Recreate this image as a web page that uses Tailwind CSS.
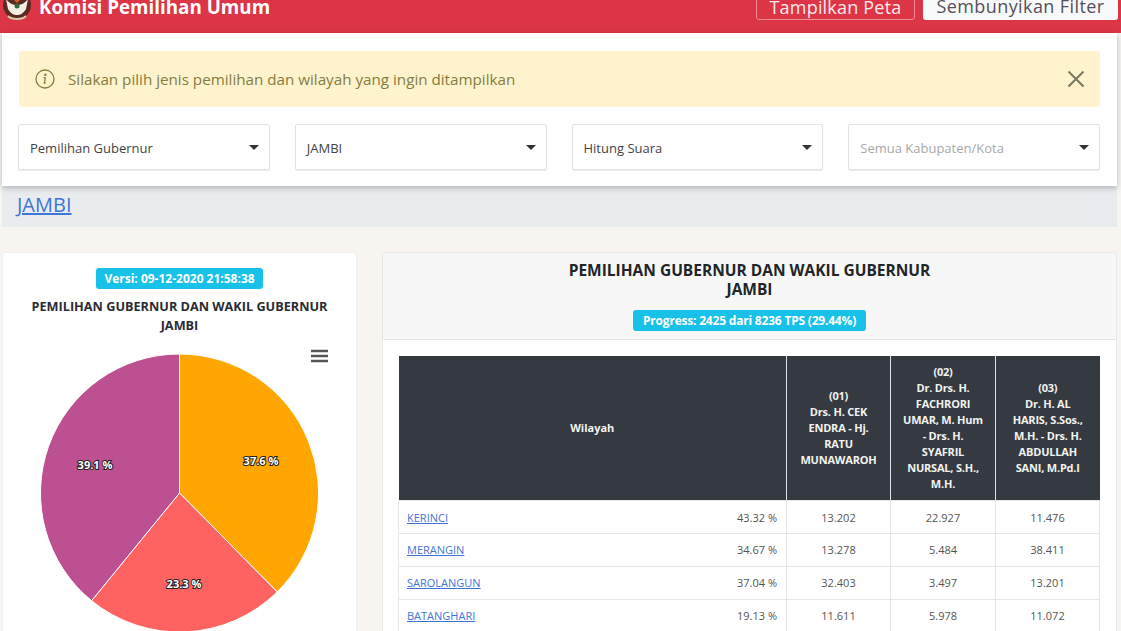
<!DOCTYPE html>
<html lang="en">
  <head>
    <meta charset="UTF-8" />
    <meta name="viewport" content="width=device-width, initial-scale=1.0" />
    <title>Komisi Pemilihan Umum</title>
    <script src="https://cdn.jsdelivr.net/npm/@tailwindcss/browser@4"></script>
  </head>
  <body class="bg-[#f8f5f1] h-[631px] overflow-hidden font-['Open_Sans',sans-serif] text-[#212529]">
    <header class="bg-[#dc3545] h-[33px] flex items-end justify-between pr-[3px] pb-[13px] overflow-hidden">
      <div class="flex items-center pl-[2px] h-[30px] mb-[-6px] relative top-[-4px]">
        <svg class="w-[30px] h-[30px]" viewBox="0 0 30 30">
          <circle cx="15" cy="13" r="14" fill="#5a2a22" />
          <path d="M4 7 C8 12 11 13 15 13 C19 13 22 12 26 7 L24 17 C21 22 18 23 15 23 C12 23 9 22 6 17 Z" fill="#f4efe6" />
          <path d="M9 5 L15 11 L21 5 L19 2 L11 2 Z" fill="#c9602f" />
          <circle cx="15" cy="14" r="2.5" fill="#2f6b3a" />
          <path d="M6 24 C10 28 20 28 24 24" stroke="#d8c9a8" stroke-width="2" fill="none" />
        </svg>
        <span class="ml-[7px] text-white font-bold text-[18.8px] leading-none">Komisi Pemilihan Umum</span>
      </div>
      <div class="flex gap-[8px]">
        <button class="h-[30px] w-[159px] border border-[#f08a94] rounded-[3px] text-white/90 text-[18px] leading-[30px] tracking-[0.2px] pt-[1px]">Tampilkan Peta</button>
        <button class="h-[30px] w-[195px] bg-[#f8f9fa] rounded-[3px] text-[#55505a] text-[18px] leading-[30px] tracking-[0.4px] pt-[1px]">Sembunyikan Filter</button>
      </div>
    </header>

    <div class="ml-[2px] mr-[4px]">
      <section class="relative bg-white h-[153px] px-[16px] pt-[18px] shadow-[0_2px_6px_rgba(0,0,0,0.25)]">
        <div class="bg-[#fff3cd] h-[56px] ml-[1px] w-[1081px] rounded-[3px] flex items-center pl-[16px] pr-[15px] text-[#857d3f]">
          <svg class="w-[20px] h-[20px] shrink-0" viewBox="0 0 20 20" fill="none" stroke="#857d3f" stroke-width="1.3">
            <circle cx="10" cy="10" r="9" />
            <path d="M10.4 8.5 L9.5 14 M8.6 8.6 H10.4 M8.6 14 H10.6" />
            <circle cx="10.4" cy="5.8" r="0.6" fill="#857d3f" />
          </svg>
          <span class="ml-[13px] text-[15.2px] flex-1">Silakan pilih jenis pemilihan dan wilayah yang ingin ditampilkan</span>
          <svg class="w-[18px] h-[18px]" viewBox="0 0 18 18" stroke="#78775f" stroke-width="2" fill="none">
            <path d="M1.5 1.5 L16.5 16.5 M16.5 1.5 L1.5 16.5" />
          </svg>
        </div>
        <div class="flex gap-[25px] mt-[17px] w-[1082px] text-[13px] text-[#444]">
          <div class="flex-1 h-[46px] bg-white border border-[#e3e3e3] rounded-[2px] shadow-[0_1px_1px_rgba(0,0,0,0.08)] flex items-center justify-between pl-[11px] pr-[10px]">
            <span class="pt-[3px]">Pemilihan Gubernur</span>
            <span class="w-0 h-0 border-x-[5px] border-x-transparent border-t-[5px] border-t-[#333]"></span>
          </div>
          <div class="flex-1 h-[46px] bg-white border border-[#e3e3e3] rounded-[2px] shadow-[0_1px_1px_rgba(0,0,0,0.08)] flex items-center justify-between pl-[11px] pr-[10px]">
            <span class="pt-[3px]">JAMBI</span>
            <span class="w-0 h-0 border-x-[5px] border-x-transparent border-t-[5px] border-t-[#333]"></span>
          </div>
          <div class="flex-1 h-[46px] bg-white border border-[#e3e3e3] rounded-[2px] shadow-[0_1px_1px_rgba(0,0,0,0.08)] flex items-center justify-between pl-[11px] pr-[10px]">
            <span class="pt-[3px]">Hitung Suara</span>
            <span class="w-0 h-0 border-x-[5px] border-x-transparent border-t-[5px] border-t-[#333]"></span>
          </div>
          <div class="flex-1 h-[46px] bg-white border border-[#e3e3e3] rounded-[2px] shadow-[0_1px_1px_rgba(0,0,0,0.08)] flex items-center justify-between pl-[11px] pr-[10px]">
            <span class="pt-[3px] text-[#a8a8a8]">Semua Kabupaten/Kota</span>
            <span class="w-0 h-0 border-x-[5px] border-x-transparent border-t-[5px] border-t-[#333]"></span>
          </div>
        </div>
      </section>

      <nav class="bg-[#e9ecef] h-[41px] pl-[15px] text-[20px] leading-[38px]">
        <a href="#" class="text-[#3f75d6] underline">JAMBI</a>
      </nav>
    </div>

    <main class="flex mt-[25px] ml-[2px] mr-[4px] gap-[25px] items-start">
      <section class="w-[355px] shrink-0 bg-white border border-[#eeeeee] rounded-[3px] pt-[12px] text-center">
        <span class="inline-block bg-[#17c1e8] text-white font-bold text-[12px] leading-[21px] h-[21px] px-[8px] rounded-[3px]">Versi: 09-12-2020 21:58:38</span>
        <h2 class="mt-[8px] font-bold text-[12.7px] leading-[19px] text-[#2b2b33]">PEMILIHAN GUBERNUR DAN WAKIL GUBERNUR<br />JAMBI</h2>
        <svg class="block mt-[11px]" width="353" height="300" viewBox="-1 -8 353 300">
          <g stroke="#fff" stroke-width="1">
            <path d="M175.5 139 L175.5 0 A139 139 0 0 1 273.2 237.9 Z" fill="#ffa600" />
            <path d="M175.5 139 L273.2 237.9 A139 139 0 0 1 87.6 246.7 Z" fill="#ff6361" />
            <path d="M175.5 139 L87.6 246.7 A139 139 0 0 1 175.5 0 Z" fill="#bc5090" />
          </g>
          <g fill="#fff" stroke="#222" stroke-width="2" paint-order="stroke" font-size="11" font-weight="700" text-anchor="middle" font-family="'Open Sans', sans-serif">
            <text x="257" y="111">37.6 %</text>
            <text x="180" y="234">23.3 %</text>
            <text x="91" y="115">39.1 %</text>
          </g>
          <path d="M307 -3 H324 M307 2 H324 M307 7 H324" stroke="#555" stroke-width="2.6" />
        </svg>
      </section>

      <section class="w-[735px] shrink-0 bg-white border border-[#e8e8e8] rounded-[3px]">
        <div class="bg-[#f7f7f7] h-[87px] border-b border-[#e5e5e5] pt-[8px] text-center">
          <h2 class="font-bold text-[15.5px] leading-[19px] text-[#212529]">PEMILIHAN GUBERNUR DAN WAKIL GUBERNUR<br />JAMBI</h2>
          <span class="inline-block mt-[11px] bg-[#17c1e8] text-white font-bold text-[12px] leading-[21px] h-[21px] px-[10px] rounded-[3px] tracking-[-0.2px]">Progress: 2425 dari 8236 TPS (29.44%)</span>
        </div>
        <div class="pl-[15px] pt-[16px]">
          <table class="table-fixed border-collapse w-[701px] text-[11px]">
            <colgroup>
              <col class="w-[388px]" />
              <col class="w-[104px]" />
              <col class="w-[105px]" />
              <col class="w-[104px]" />
            </colgroup>
            <thead class="bg-[#343a40] text-[#f2f2f2] font-bold leading-[16px] text-center">
              <tr class="h-[144px]">
                <th class="px-[8px]">Wilayah</th>
                <th class="px-[8px] border-l border-[#dee2e6] tracking-[-0.2px]">(01)<br />Drs. H. CEK<br />ENDRA - Hj.<br />RATU<br />MUNAWAROH</th>
                <th class="px-[4px] border-l border-[#dee2e6] tracking-[-0.2px]">(02)<br />Dr. Drs. H.<br />FACHRORI<br />UMAR, M. Hum<br />- Drs. H.<br />SYAFRIL<br />NURSAL, S.H.,<br />M.H.</th>
                <th class="px-[4px] border-l border-[#dee2e6] tracking-[-0.2px]">(03)<br />Dr. H. AL<br />HARIS, S.Sos.,<br />M.H. - Drs. H.<br />ABDULLAH<br />SANI, M.Pd.I</th>
              </tr>
            </thead>
            <tbody class="text-[#555]">
              <tr class="h-[33px] border border-[#e6e6e6]">
                <td class="pl-[8px] pr-[9px] pt-[3px]"><div class="flex justify-between"><a href="#" class="text-[#3f75d6] underline">KERINCI</a><span>43.32 %</span></div></td>
                <td class="text-center border-l border-[#e6e6e6] pt-[3px]">13.202</td>
                <td class="text-center border-l border-[#e6e6e6] pt-[3px]">22.927</td>
                <td class="text-center border-l border-[#e6e6e6] pt-[3px]">11.476</td>
              </tr>
              <tr class="h-[33px] border border-[#e6e6e6]">
                <td class="pl-[8px] pr-[9px] pt-[2px]"><div class="flex justify-between"><a href="#" class="text-[#3f75d6] underline">MERANGIN</a><span>34.67 %</span></div></td>
                <td class="text-center border-l border-[#e6e6e6] pt-[2px]">13.278</td>
                <td class="text-center border-l border-[#e6e6e6] pt-[2px]">5.484</td>
                <td class="text-center border-l border-[#e6e6e6] pt-[2px]">38.411</td>
              </tr>
              <tr class="h-[33px] border border-[#e6e6e6]">
                <td class="pl-[8px] pr-[9px] pt-[2px]"><div class="flex justify-between"><a href="#" class="text-[#3f75d6] underline">SAROLANGUN</a><span>37.04 %</span></div></td>
                <td class="text-center border-l border-[#e6e6e6] pt-[2px]">32.403</td>
                <td class="text-center border-l border-[#e6e6e6] pt-[2px]">3.497</td>
                <td class="text-center border-l border-[#e6e6e6] pt-[2px]">13.201</td>
              </tr>
              <tr class="h-[33px] border border-[#e6e6e6]">
                <td class="pl-[8px] pr-[9px] pt-[2px]"><div class="flex justify-between"><a href="#" class="text-[#3f75d6] underline">BATANGHARI</a><span>19.13 %</span></div></td>
                <td class="text-center border-l border-[#e6e6e6] pt-[2px]">11.611</td>
                <td class="text-center border-l border-[#e6e6e6] pt-[2px]">5.978</td>
                <td class="text-center border-l border-[#e6e6e6] pt-[2px]">11.072</td>
              </tr>
            </tbody>
          </table>
        </div>
      </section>
    </main>
  </body>
</html>
